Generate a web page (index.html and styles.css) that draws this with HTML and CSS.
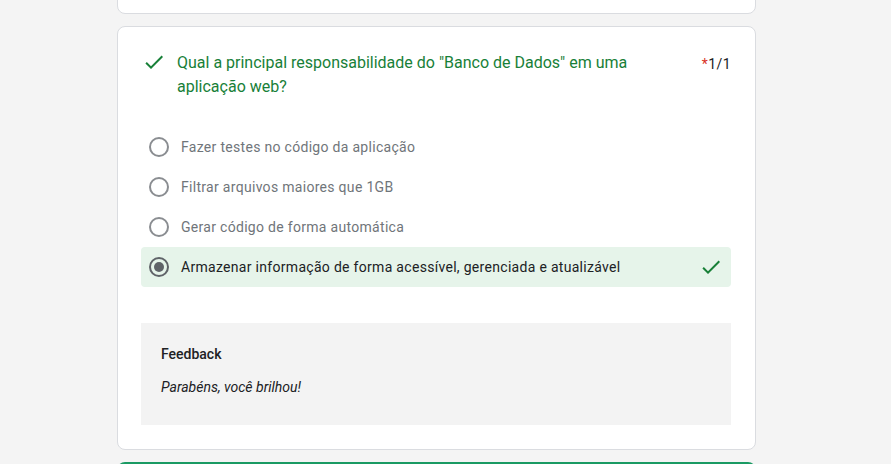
FILE: index.html
```html
<!DOCTYPE html>
<html lang="pt-BR">
<head>
<meta charset="utf-8">
<link rel="stylesheet" href="styles.css">
</head>
<body>
<div class="page">
  <div class="card card-prev"></div>

  <div class="card question">
    <div class="q-head">
      <svg class="q-check" width="24" height="24" viewBox="0 0 24 24"><path d="M9 16.17L4.83 12l-1.42 1.41L9 19 21 7l-1.41-1.41z" fill="#188038"/></svg>
      <div class="q-title">Qual a principal responsabilidade do "Banco de Dados" em uma aplicação web?</div>
      <div class="q-score"><span class="req">*</span>1/1</div>
    </div>

    <div class="options">
      <div class="option">
        <span class="radio"></span>
        <span class="opt-text">Fazer testes no código da aplicação</span>
      </div>
      <div class="option">
        <span class="radio"></span>
        <span class="opt-text">Filtrar arquivos maiores que 1GB</span>
      </div>
      <div class="option">
        <span class="radio"></span>
        <span class="opt-text">Gerar código de forma automática</span>
      </div>
      <div class="option option-correct">
        <span class="radio radio-on"></span>
        <span class="opt-text">Armazenar informação de forma acessível, gerenciada e atualizável</span>
        <svg class="opt-check" width="24" height="24" viewBox="0 0 24 24"><path d="M9 16.17L4.83 12l-1.42 1.41L9 19 21 7l-1.41-1.41z" fill="#188038"/></svg>
      </div>
    </div>

    <div class="feedback">
      <div class="fb-title">Feedback</div>
      <div class="fb-text">Parabéns, você brilhou!</div>
    </div>
  </div>

  <div class="card card-next"></div>
</div>
</body>
</html>
```

FILE: styles.css
```css
html, body {
  margin: 0;
  padding: 0;
  background: #f4f4f4;
  font-family: Roboto, "Liberation Sans", Arial, sans-serif;
  height: 464px;
  overflow: hidden;
}

.page {
  display: flex;
  flex-direction: column;
  gap: 12px;
  width: 639px;
  margin-left: 117px;
  margin-top: -40px;
}

.card {
  background: #fff;
  border: 1px solid #dadce0;
  border-radius: 8px;
  box-sizing: border-box;
}

.card-prev {
  height: 54px;
}

.card-next {
  height: 20px;
  border-top: 8px solid #1a9a63;
}

.question {
  height: 424px;
  padding: 23px 24px 23px 23px;
}

.q-head {
  display: flex;
  align-items: flex-start;
}

.q-check {
  flex: none;
  margin-right: 11px;
  margin-left: 1px;
}

.q-title {
  flex: 1;
  color: #188038;
  font-size: 16px;
  line-height: 24px;
  padding-top: 1px;
  padding-right: 20px;
}

.q-score {
  flex: none;
  font-size: 14px;
  line-height: 24px;
  color: #202124;
  letter-spacing: 0.4px;
  margin-top: 2px;
}

.req {
  color: #d93025;
}

.options {
  margin-top: 28px;
  display: flex;
  flex-direction: column;
}

.option {
  display: flex;
  align-items: center;
  height: 40px;
  padding: 0 8px;
  border-radius: 4px;
}

.option-correct {
  background: #e6f4ea;
}

.radio {
  flex: none;
  width: 20px;
  height: 20px;
  box-sizing: border-box;
  border: 2px solid #8a8d91;
  border-radius: 50%;
  margin-right: 12px;
  display: flex;
  align-items: center;
  justify-content: center;
}

.radio-on {
  border-color: #5f6368;
}

.radio-on::after {
  content: "";
  width: 10px;
  height: 10px;
  border-radius: 50%;
  background: #5f6368;
}

.opt-text {
  flex: 1;
  font-size: 14px;
  line-height: 20px;
  color: #70757a;
  letter-spacing: 0.3px;
}

.option-correct .opt-text {
  color: #202124;
}

.opt-check {
  flex: none;
}

.feedback {
  margin-top: 36px;
  background: #f3f3f3;
  padding: 21px 20px 20px;
  height: 102px;
  box-sizing: border-box;
}

.fb-title {
  font-size: 14px;
  line-height: 20px;
  font-weight: 500;
  color: #202124;
}

.fb-text {
  margin-top: 13px;
  font-size: 14px;
  line-height: 20px;
  font-style: italic;
  color: #202124;
}
```
